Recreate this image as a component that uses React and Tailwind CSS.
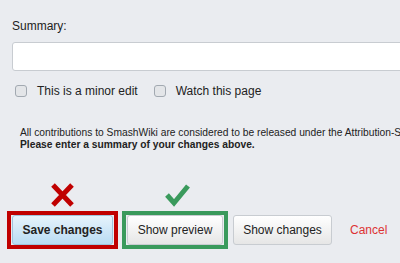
export default function App() {
  const font = { fontFamily: '"Liberation Sans", Arial, sans-serif' };
  return (
    <div className="w-[400px] h-[263px] overflow-hidden bg-[#eaecf0] text-[#222]" style={font}>
      <div className="pl-[12px] pt-[18px]">
        <div className="text-[12px] leading-[16px]">Summary:</div>
        <div className="mt-[8px] h-[29px] bg-white border border-[#c8ccd1] rounded-[3px] w-[420px]"></div>
        <div className="mt-[12px] flex items-center text-[12px] leading-[16px]">
          <span className="ml-[3px] w-[12px] h-[12px] rounded-[3px] border border-[#a2a9b1] bg-[#e3e5e8]"></span>
          <span className="ml-[10px]">This is a minor edit</span>
          <span className="ml-[16px] w-[12px] h-[12px] rounded-[3px] border border-[#a2a9b1] bg-[#e3e5e8]"></span>
          <span className="ml-[10px]">Watch this page</span>
        </div>
        <div className="mt-[28px] ml-[8px] text-[10.25px] leading-[12px] whitespace-nowrap">
          <div>All contributions to SmashWiki are considered to be released under the Attribution-ShareAlike</div>
          <div className="font-bold">Please enter a summary of your changes above.</div>
        </div>
      </div>
      <div className="mt-[32px] pl-[7px] flex items-end text-[12px]">
        <div className="flex flex-col items-center">
          <svg width="25" height="24" viewBox="0 0 25 24">
            <path d="M3 2 L22 22 M22 2 L3 22" stroke="#c00000" strokeWidth="5" fill="none" />
          </svg>
          <div className="mt-[4px] border-[4px] border-[#c00000] px-[1px]">
            <div className="w-[101px] h-[30px] rounded-[3px] border border-[#9fc3dc] bg-gradient-to-b from-[#e6f3fc] to-[#b9dcf3] flex items-center justify-center font-bold text-[#222]">
              Save changes
            </div>
          </div>
        </div>
        <div className="ml-[4px] flex flex-col items-center">
          <svg width="25" height="24" viewBox="0 0 25 24" className="ml-[5px]">
            <path d="M2 12 L9 20 L23 3" stroke="#3a9a5c" strokeWidth="5" fill="none" />
          </svg>
          <div className="mt-[4px] border-[4px] border-[#3a9a5c] px-[1px]">
            <div className="w-[96px] h-[30px] rounded-[3px] border border-[#c8ccd1] bg-gradient-to-b from-[#ffffff] to-[#e6e6e6] flex items-center justify-center text-[#222]">
              Show preview
            </div>
          </div>
        </div>
        <div className="ml-[5px] mb-[4px] w-[99px] h-[30px] rounded-[3px] border border-[#c8ccd1] bg-gradient-to-b from-[#ffffff] to-[#e6e6e6] flex items-center justify-center text-[#222]">
          Show changes
        </div>
        <div className="ml-[18px] mb-[4px] h-[30px] flex items-center text-[#dd3333]">Cancel</div>
      </div>
    </div>
  );
}
